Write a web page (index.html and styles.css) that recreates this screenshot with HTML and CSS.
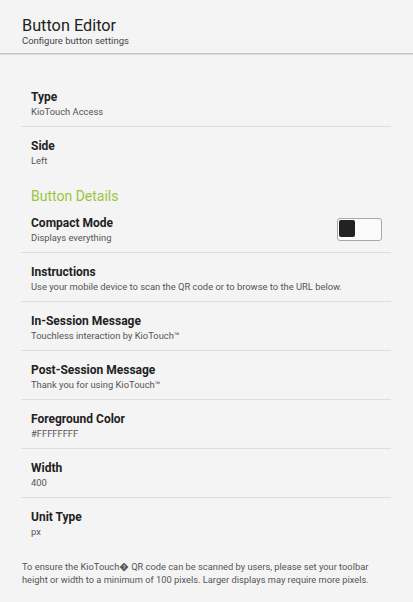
FILE: index.html
```html
<!DOCTYPE html>
<html>
<head>
<meta charset="utf-8">
<link rel="stylesheet" href="styles.css">
</head>
<body>
<header class="header">
  <div class="header-title">Button Editor</div>
  <div class="header-sub">Configure button settings</div>
</header>
<main class="list">
  <div class="row">
    <div class="row-text">
      <div class="row-title">Type</div>
      <div class="row-sub">KioTouch Access</div>
    </div>
  </div>
  <div class="row row-last">
    <div class="row-text">
      <div class="row-title">Side</div>
      <div class="row-sub">Left</div>
    </div>
  </div>
  <div class="section-head">Button Details</div>
  <div class="row">
    <div class="row-text">
      <div class="row-title">Compact Mode</div>
      <div class="row-sub">Displays everything</div>
    </div>
    <div class="toggle"><span class="knob"></span></div>
  </div>
  <div class="row">
    <div class="row-text">
      <div class="row-title">Instructions</div>
      <div class="row-sub">Use your mobile device to scan the QR code or to browse to the URL below.</div>
    </div>
  </div>
  <div class="row">
    <div class="row-text">
      <div class="row-title">In-Session Message</div>
      <div class="row-sub">Touchless interaction by KioTouch™</div>
    </div>
  </div>
  <div class="row">
    <div class="row-text">
      <div class="row-title">Post-Session Message</div>
      <div class="row-sub">Thank you for using KioTouch™</div>
    </div>
  </div>
  <div class="row">
    <div class="row-text">
      <div class="row-title">Foreground Color</div>
      <div class="row-sub">#FFFFFFFF</div>
    </div>
  </div>
  <div class="row">
    <div class="row-text">
      <div class="row-title">Width</div>
      <div class="row-sub">400</div>
    </div>
  </div>
  <div class="row row-last">
    <div class="row-text">
      <div class="row-title">Unit Type</div>
      <div class="row-sub">px</div>
    </div>
  </div>
</main>
<footer class="footer">To ensure the KioTouch&#xFFFD; QR code can be scanned by users, please set your toolbar height or width to a minimum of 100 pixels. Larger displays may require more pixels.</footer>
</body>
</html>
```
FILE: styles.css
```css
html, body {
  margin: 0;
  padding: 0;
  background: #f4f4f4;
  font-family: Roboto, "Liberation Sans", sans-serif;
  color: #222;
}
body {
  width: 413px;
  height: 602px;
  overflow: hidden;
}
.header {
  padding: 16px 22px 6px;
  border-bottom: 1px solid #c4c4c4;
  box-shadow: 0 1px 0 #dcdcdc;
}
.header-title {
  font-size: 16.3px;
  line-height: 19px;
  color: #222;
}
.header-sub {
  font-size: 9.5px;
  line-height: 12px;
  color: #444;
}
.list {
  margin: 24px 22px 0 21px;
  width: 370px;
}
.row {
  display: flex;
  align-items: center;
  justify-content: space-between;
  height: 48px;
  padding: 0 9px 0 10px;
  border-bottom: 1px solid #dedede;
}
.row-last {
  border-bottom-color: transparent;
}
.row-text {
  align-self: flex-start;
  padding-top: 12px;
}
.row-title {
  font-size: 12px;
  line-height: 15px;
  font-weight: 700;
  color: #222;
}
.row-sub {
  font-size: 9.4px;
  line-height: 13px;
  color: #555;
}
.section-head {
  padding: 13px 10px 0;
  height: 15px;
  font-size: 14px;
  line-height: 15px;
  color: #9bc53d;
}
.toggle {
  width: 41px;
  height: 19px;
  border: 1px solid #a8a8a8;
  border-radius: 3px;
  background: #fbfbfb;
  padding: 1px;
  box-sizing: content-box;
  display: flex;
  margin-top: 2px;
}
.toggle .knob {
  width: 16px;
  height: 17px;
  background: #222;
  border-radius: 2px;
}
.footer {
  width: 370px;
  padding: 13px 0 0 22px;
  font-size: 9.3px;
  line-height: 13px;
  color: #555;
}
```
